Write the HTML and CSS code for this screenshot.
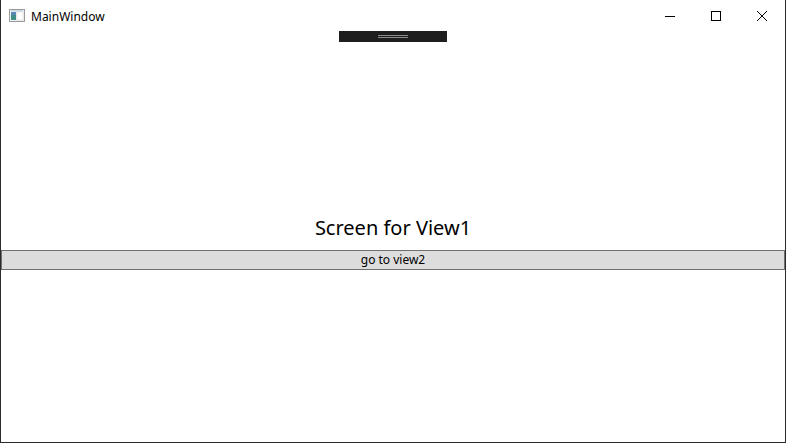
FILE: index.html
```html
<!DOCTYPE html>
<html lang="en">
<head>
    <meta charset="UTF-8">
    <title>MainWindow</title>
    <link rel="stylesheet" href="styles.css">
</head>
<body>
    <div class="window">
        <div class="title-bar">
            <svg class="app-icon" width="16" height="16" viewBox="0 0 16 16">
                <rect x="0.5" y="1.5" width="15" height="12" fill="#f4f4f4" stroke="#9a9a9a"/>
                <rect x="2" y="4" width="5" height="8" fill="#3f8f86"/>
                <rect x="2" y="4" width="5" height="3" fill="#5a86b8"/>
                <rect x="8" y="4" width="6" height="8" fill="#ffffff" stroke="#d0d0d0" stroke-width="0.5"/>
                <rect x="2" y="2" width="12" height="1.5" fill="#c8d6e4"/>
            </svg>
            <span class="title">MainWindow</span>
            <div class="controls">
                <div class="ctl">
                    <svg width="12" height="12" viewBox="0 0 12 12"><path d="M1 6.5h10" stroke="#000" stroke-width="1"/></svg>
                </div>
                <div class="ctl">
                    <svg width="12" height="12" viewBox="0 0 12 12"><rect x="1.5" y="1.5" width="9" height="9" fill="none" stroke="#000" stroke-width="1"/></svg>
                </div>
                <div class="ctl">
                    <svg width="12" height="12" viewBox="0 0 12 12"><path d="M1 1l10 10M11 1L1 11" stroke="#000" stroke-width="1"/></svg>
                </div>
            </div>
        </div>
        <div class="content">
            <div class="dev-bar"><span class="grip"></span></div>
            <div class="view">
                <div class="heading">Screen for View1</div>
                <button class="nav-btn">go to view2</button>
            </div>
        </div>
    </div>
</body>
</html>
```

FILE: styles.css
```css
html, body {
    margin: 0;
    padding: 0;
    background: #ffffff;
}

.window {
    width: 786px;
    height: 443px;
    box-sizing: border-box;
    border: 1px solid #2b2b2b;
    border-top: none;
    display: flex;
    flex-direction: column;
    font-family: "Noto Sans", "Liberation Sans", sans-serif;
    color: #000;
}

.title-bar {
    height: 31px;
    display: flex;
    align-items: center;
    flex-shrink: 0;
}

.app-icon {
    margin-left: 8px;
    margin-top: 1px;
}

.title {
    margin-left: 6px;
    font-size: 12px;
    margin-top: 1px;
}

.controls {
    margin-left: auto;
    display: flex;
    height: 100%;
}

.ctl {
    width: 46px;
    display: flex;
    align-items: center;
    justify-content: center;
}

.content {
    flex: 1;
    display: flex;
    flex-direction: column;
}

.dev-bar {
    align-self: center;
    width: 108px;
    height: 11px;
    background: #1e1e1e;
    display: flex;
    align-items: center;
    justify-content: center;
}

.grip {
    width: 30px;
    height: 3px;
    border-top: 1px solid #8a8a8a;
    border-bottom: 1px solid #8a8a8a;
    box-sizing: border-box;
}

.view {
    display: flex;
    flex-direction: column;
    padding-top: 171px;
}

.heading {
    text-align: center;
    font-size: 20px;
    line-height: 30px;
    height: 30px;
}

.nav-btn {
    margin-top: 7px;
    height: 20px;
    padding: 0;
    border: 1px solid #707070;
    background: #dddddd;
    font-family: "Noto Sans", "Liberation Sans", sans-serif;
    font-size: 12px;
    line-height: 16px;
    color: #000;
}
```
